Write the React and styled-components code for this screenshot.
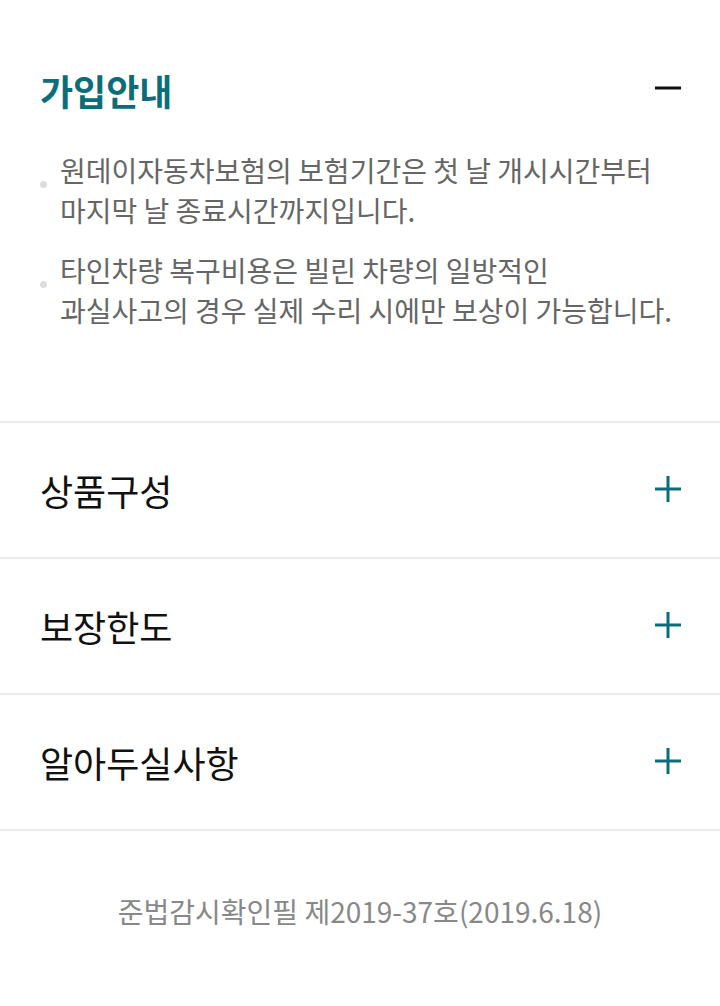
import React, { useState } from 'react';
import styled, { createGlobalStyle } from 'styled-components';

const GlobalStyle = createGlobalStyle`
  body {
    margin: 0;
    background: #fff;
    font-family: "Noto Sans CJK KR", "Noto Sans", sans-serif;
  }
`;

const sections = [
  {
    title: '가입안내',
    items: [
      ['원데이자동차보험의 보험기간은 첫 날 개시시간부터', '마지막 날 종료시간까지입니다.'],
      ['타인차량 복구비용은 빌린 차량의 일방적인', '과실사고의 경우 실제 수리 시에만 보상이 가능합니다.'],
    ],
  },
  { title: '상품구성', items: [] },
  { title: '보장한도', items: [] },
  { title: '알아두실사항', items: [] },
];

const App = () => {
  const [open, setOpen] = useState(0);

  return (
    <Page>
      <GlobalStyle />
      {sections.map((s, i) => (
        <Section key={s.title} open={open === i}>
          <Header open={open === i} onClick={() => setOpen(open === i ? -1 : i)}>
            <Title open={open === i}>{s.title}</Title>
            <Toggle open={open === i} />
          </Header>
          {open === i && s.items.length > 0 && (
            <List>
              {s.items.map((lines) => (
                <Item key={lines[0]}>
                  {lines.map((l) => (
                    <Line key={l}>{l}</Line>
                  ))}
                </Item>
              ))}
            </List>
          )}
        </Section>
      ))}
      <Footer>준법감시확인필 제2019-37호(2019.6.18)</Footer>
    </Page>
  );
};

const Toggle = ({ open }) => (
  <Icon viewBox="0 0 26 26" open={open}>
    <line x1="0" y1="13" x2="26" y2="13" />
    {!open && <line x1="13" y1="0" x2="13" y2="26" />}
  </Icon>
);

const Page = styled.div`
  width: 720px;
  min-height: 1006px;
  background: #fff;
`;

const Section = styled.section`
  border-bottom: 2px solid #ebebeb;
  padding: ${(p) => (p.open ? '56px 0 91px' : '0')};
`;

const Header = styled.div`
  display: flex;
  align-items: center;
  justify-content: space-between;
  height: ${(p) => (p.open ? '68px' : '134px')};
  padding: 0 39px 0 40px;
  cursor: pointer;
`;

const Title = styled.h2`
  margin: 0;
  font-size: 36px;
  font-weight: ${(p) => (p.open ? 700 : 400)};
  color: ${(p) => (p.open ? '#0b6d78' : '#111')};
`;

const Icon = styled.svg`
  width: 26px;
  height: 26px;
  margin-top: ${(p) => (p.open ? '-4px' : '-2px')};
  stroke: ${(p) => (p.open ? '#111' : '#0b6d78')};
  stroke-width: 3;
`;

const List = styled.ul`
  list-style: none;
  margin: 26px 0 0;
  padding: 0 30px 0 60px;
  display: flex;
  flex-direction: column;
  gap: 20px;
`;

const Item = styled.li`
  position: relative;
  font-size: 28px;
  line-height: 40px;
  color: #666;

  &::before {
    content: '';
    position: absolute;
    left: -20px;
    top: 31px;
    width: 7px;
    height: 7px;
    border-radius: 50%;
    background: #ddd;
  }
`;

const Line = styled.div`
  white-space: nowrap;
`;

const Footer = styled.div`
  padding-top: 60px;
  text-align: center;
  font-size: 28px;
  line-height: 40px;
  color: #888;
`;

export default App;
